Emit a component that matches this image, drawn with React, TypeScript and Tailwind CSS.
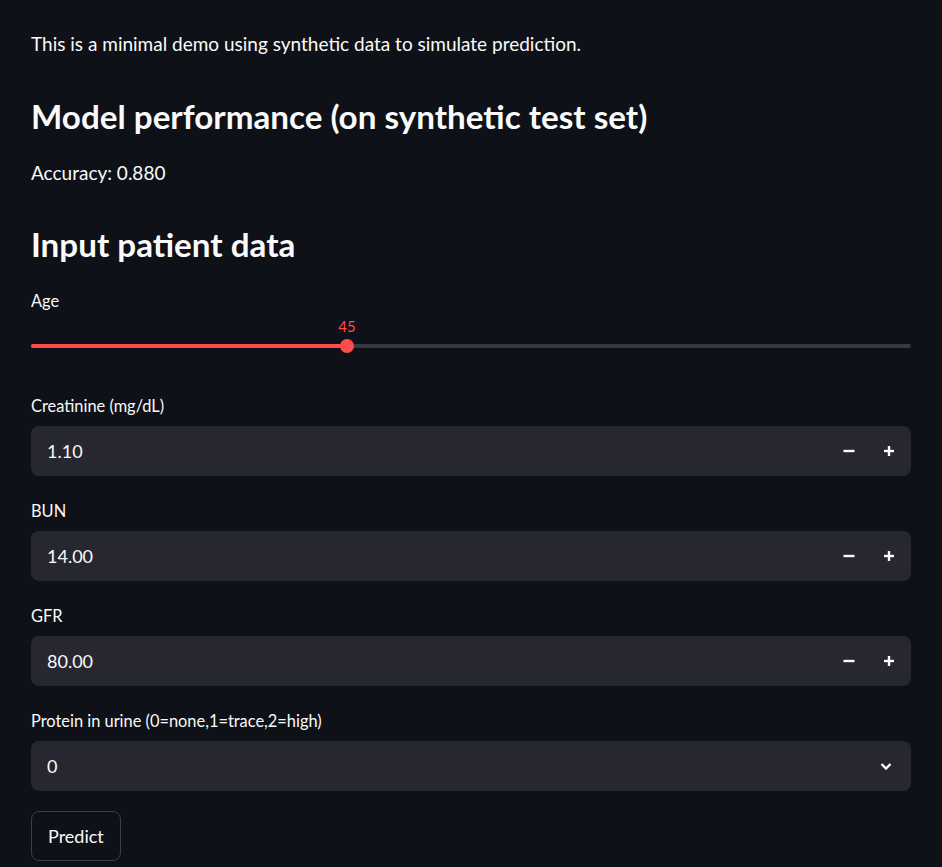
import React from "react";

const font = { fontFamily: "Lato, 'Noto Sans', sans-serif" };

function NumberInput({ label, value }: { label: string; value: string }) {
  return (
    <div className="flex flex-col">
      <div className="h-6 flex items-center text-[16.4px] text-[#fafafa]">{label}</div>
      <div className="mt-2 h-[50px] rounded-lg bg-[#262730] flex items-center pl-4 pr-[2px]">
        <span className="flex-1 text-[18px] text-[#fafafa]">{value}</span>
        <button className="w-10 h-full flex items-center justify-center">
          <svg width="12" height="12" viewBox="0 0 12 12">
            <rect x="0.5" y="4.8" width="11" height="2.4" fill="#fafafa" />
          </svg>
        </button>
        <button className="w-10 h-full flex items-center justify-center">
          <svg width="12" height="12" viewBox="0 0 12 12">
            <rect x="1" y="4.8" width="10" height="2.4" fill="#fafafa" />
            <rect x="4.8" y="1" width="2.4" height="10" fill="#fafafa" />
          </svg>
        </button>
      </div>
    </div>
  );
}

export default function App() {
  const pct = (347 - 31) / 880;
  return (
    <div className="min-h-[867px] bg-[#0e1117] text-[#fafafa]" style={font}>
      <div className="w-[880px] ml-[31px] pt-[30px] pb-[6px] flex flex-col">
        <p className="h-7 flex items-center text-[19px]">
          This is a minimal demo using synthetic data to simulate prediction.
        </p>
        <h2 className="mt-[34px] h-[50px] flex items-center text-[33.2px] font-bold">
          Model performance (on synthetic test set)
        </h2>
        <p className="mt-[17px] h-7 flex items-center text-[19px]">Accuracy: 0.880</p>
        <h2 className="mt-[33px] h-[50px] flex items-center text-[33.2px] font-bold">
          Input patient data
        </h2>

        <div className="mt-[19px] flex flex-col">
          <div className="h-6 flex items-center text-[16.4px]">Age</div>
          <div className="relative h-[45px]">
            <span
              className="absolute top-[2px] -translate-x-1/2 text-[15px] text-[#ff4b4b]"
              style={{ left: `${pct * 100}%` }}
            >
              45
            </span>
            <div className="absolute left-0 right-0 top-[31px] h-1 rounded-full bg-[#363942]" />
            <div
              className="absolute left-0 top-[31px] h-1 rounded-full bg-[#ff4b4b]"
              style={{ width: `${pct * 100}%` }}
            />
            <div
              className="absolute top-[26px] w-[14px] h-[14px] -translate-x-1/2 rounded-full bg-[#ff4b4b]"
              style={{ left: `${pct * 100}%` }}
            />
          </div>
        </div>

        <div className="mt-[36px] flex flex-col gap-[23px]">
          <NumberInput label="Creatinine (mg/dL)" value="1.10" />
          <NumberInput label="BUN" value="14.00" />
          <NumberInput label="GFR" value="80.00" />
          <div className="flex flex-col">
            <div className="h-6 flex items-center text-[16.4px]">
              Protein in urine (0=none,1=trace,2=high)
            </div>
            <div className="mt-2 h-[50px] rounded-lg bg-[#262730] flex items-center pl-4 pr-[18px]">
              <span className="flex-1 text-[18px]">0</span>
              <svg width="14" height="14" viewBox="0 0 14 14" fill="none">
                <path d="M2.5 5l4.5 4.5L11.5 5" stroke="#fafafa" strokeWidth="2.4" />
              </svg>
            </div>
          </div>
        </div>

        <div className="mt-5">
          <button className="h-[50px] px-4 rounded-lg border border-[#3d4044] text-[18px] text-[#fafafa] bg-[#0e1117]">
            Predict
          </button>
        </div>
      </div>
    </div>
  );
}
